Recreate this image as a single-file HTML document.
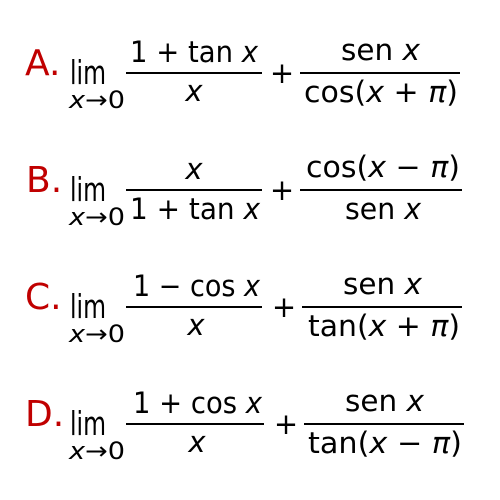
<!DOCTYPE html>
<html><head><style>
html,body{margin:0;padding:0;background:#fff;width:500px;height:500px;overflow:hidden}
svg{display:block}
text{font-family:"DejaVu Sans","Liberation Sans",sans-serif;fill:#000}
.L{fill:#c00000;font-size:36px}
.m{font-size:29px}
.lim{font-size:33px}
.s{font-size:24px}
.i{font-style:italic}
</style></head><body>
<svg width="500" height="500" viewBox="0 0 500 500">
<!-- A -->
<g>
<text class="L" x="25" y="75">A.</text>
<text class="lim" x="70" y="84" textLength="36" lengthAdjust="spacingAndGlyphs">lim</text>
<text class="s" x="69" y="108" textLength="56" lengthAdjust="spacingAndGlyphs"><tspan class="i">x</tspan>→0</text>
<rect x="126" y="72" width="136" height="2"/>
<text class="m" x="130" y="62" textLength="128" lengthAdjust="spacingAndGlyphs">1 + tan <tspan class="i">x</tspan></text>
<text class="m i" x="194" y="101" text-anchor="middle">x</text>
<text class="m" x="282" y="83" text-anchor="middle">+</text>
<rect x="300" y="72" width="160" height="2"/>
<text class="m" x="341" y="60" textLength="79" lengthAdjust="spacingAndGlyphs">sen <tspan class="i">x</tspan></text>
<text class="m" x="304" y="102" textLength="154" lengthAdjust="spacingAndGlyphs">cos(<tspan class="i">x</tspan> + <tspan class="i">π</tspan>)</text>
</g>
<!-- B -->
<g transform="translate(0,117)">
<text class="L" x="26" y="75">B.</text>
<text class="lim" x="70" y="84" textLength="36" lengthAdjust="spacingAndGlyphs">lim</text>
<text class="s" x="69" y="108" textLength="56" lengthAdjust="spacingAndGlyphs"><tspan class="i">x</tspan>→0</text>
<rect x="126" y="72" width="136" height="2"/>
<text class="m i" x="194" y="62" text-anchor="middle">x</text>
<text class="m" x="130" y="102" textLength="130" lengthAdjust="spacingAndGlyphs">1 + tan <tspan class="i">x</tspan></text>
<text class="m" x="282" y="83" text-anchor="middle">+</text>
<rect x="300" y="72" width="162" height="2"/>
<text class="m" x="306" y="60" textLength="154" lengthAdjust="spacingAndGlyphs">cos(<tspan class="i">x</tspan> − <tspan class="i">π</tspan>)</text>
<text class="m" x="345" y="102" textLength="76" lengthAdjust="spacingAndGlyphs">sen <tspan class="i">x</tspan></text>
</g>
<!-- C -->
<g transform="translate(0,234)">
<text class="L" x="25" y="75">C.</text>
<text class="lim" x="70" y="84" textLength="36" lengthAdjust="spacingAndGlyphs">lim</text>
<text class="s" x="69" y="108" textLength="56" lengthAdjust="spacingAndGlyphs"><tspan class="i">x</tspan>→0</text>
<rect x="126" y="72" width="136" height="2"/>
<text class="m" x="133" y="62" textLength="127" lengthAdjust="spacingAndGlyphs">1 − cos <tspan class="i">x</tspan></text>
<text class="m i" x="196" y="101" text-anchor="middle">x</text>
<text class="m" x="284" y="83" text-anchor="middle">+</text>
<rect x="302" y="72" width="160" height="2"/>
<text class="m" x="343" y="60" textLength="79" lengthAdjust="spacingAndGlyphs">sen <tspan class="i">x</tspan></text>
<text class="m" x="308" y="102" textLength="152" lengthAdjust="spacingAndGlyphs">tan(<tspan class="i">x</tspan> + <tspan class="i">π</tspan>)</text>
</g>
<!-- D -->
<g transform="translate(0,351)">
<text class="L" x="25" y="75">D.</text>
<text class="lim" x="70" y="84" textLength="36" lengthAdjust="spacingAndGlyphs">lim</text>
<text class="s" x="69" y="108" textLength="56" lengthAdjust="spacingAndGlyphs"><tspan class="i">x</tspan>→0</text>
<rect x="126" y="72" width="138" height="2"/>
<text class="m" x="133" y="62" textLength="129" lengthAdjust="spacingAndGlyphs">1 + cos <tspan class="i">x</tspan></text>
<text class="m i" x="197" y="101" text-anchor="middle">x</text>
<text class="m" x="286" y="83" text-anchor="middle">+</text>
<rect x="304" y="72" width="160" height="2"/>
<text class="m" x="345" y="60" textLength="79" lengthAdjust="spacingAndGlyphs">sen <tspan class="i">x</tspan></text>
<text class="m" x="308" y="102" textLength="154" lengthAdjust="spacingAndGlyphs">tan(<tspan class="i">x</tspan> − <tspan class="i">π</tspan>)</text>
</g>
</svg>
</body></html>
